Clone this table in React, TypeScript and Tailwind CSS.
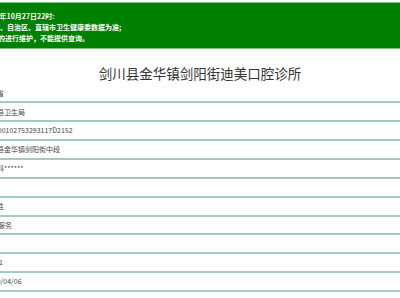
import React from 'react';

const rows: { text: string; shift: string }[] = [
  { text: '四川省', shift: 'ml-[-17px]' },
  { text: '剑川县卫生局', shift: 'ml-[-17px]' },
  { text: 'PDY00102753293117D2152', shift: 'ml-[-15px]' },
  { text: '剑川县金华镇剑阳街中段', shift: 'ml-[-17px]' },
  { text: '口腔科******', shift: 'ml-[-17px]' },
  { text: '', shift: '' },
  { text: '营利性', shift: 'ml-[-17px]' },
  { text: '口腔服务', shift: 'ml-[-16px]' },
  { text: '', shift: '' },
  { text: '1', shift: 'ml-[-1px]' },
  { text: '2019/04/06', shift: 'ml-[-15px]' },
];

const App: React.FC = () => {
  return (
    <div className="w-[400px] h-[298px] overflow-hidden bg-white pt-[2px] font-['Noto_Sans_CJK_SC','Noto_Sans',sans-serif]">
      <div className="h-[47px] bg-[#008000] border-y border-[#7fbf7f] pt-[8px] overflow-hidden text-white font-bold text-[7px] leading-[11px] whitespace-nowrap">
        <div className="ml-[-31px]">截至2020年10月27日22时:</div>
        <div className="ml-[-21px]">以各省、自治区、直辖市卫生健康委数据为准;</div>
        <div className="ml-[-2px]">的进行维护，不能提供查询。</div>
      </div>

      <h1 className="mt-[14px] mb-[1.5px] h-[20px] text-center text-[13.5px] leading-[20px] text-[#333] font-normal">
        剑川县金华镇剑阳街迪美口腔诊所
      </h1>

      <div className="overflow-hidden">
        {rows.map((row, i) => (
          <div
            key={i}
            className="h-[18.87px] border-b-2 border-[#a4cdb9] flex items-center text-[7px] text-[#444] whitespace-nowrap"
          >
            <span className={row.shift}>{row.text}</span>
          </div>
        ))}
      </div>
    </div>
  );
};

export default App;
